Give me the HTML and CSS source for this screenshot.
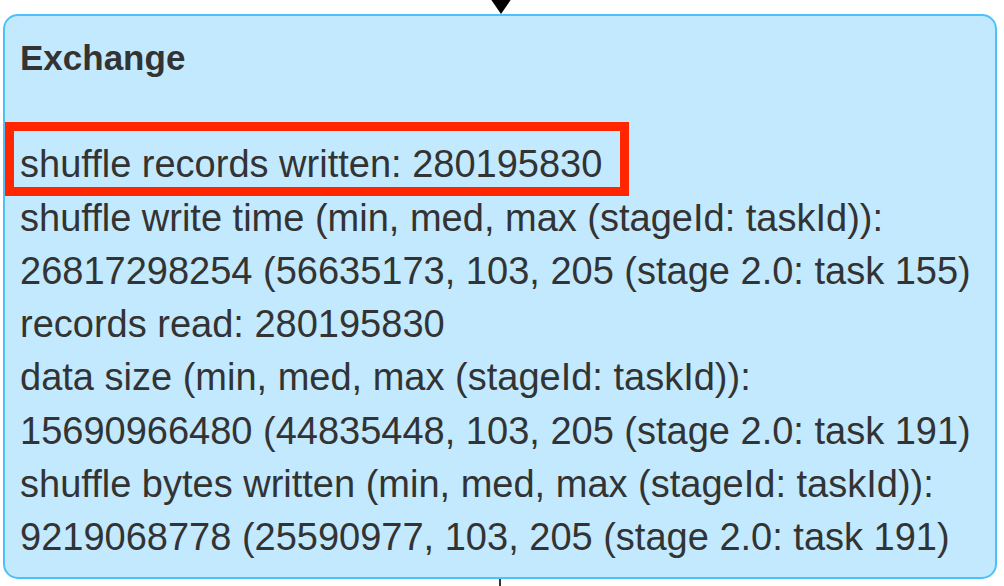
FILE: index.html
```html
<!DOCTYPE html>
<html>
<head>
<meta charset="utf-8">
<link rel="stylesheet" href="styles.css">
</head>
<body>
<div class="canvas">
  <svg class="edge-in" width="30" height="16" viewBox="0 0 30 16"><polygon points="5,-2 27,-2 16,14" fill="#000"/></svg>
  <div class="node">
    <div class="title">Exchange</div>
    <div class="spacer"></div>
    <div class="metrics">
      <div class="metric"><span class="highlight">shuffle records written: 280195830</span></div>
      <div class="metric">shuffle write time (min, med, max (stageId: taskId)):</div>
      <div class="metric">26817298254 (56635173, 103, 205 (stage 2.0: task 155)</div>
      <div class="metric">records read: 280195830</div>
      <div class="metric">data size (min, med, max (stageId: taskId)):</div>
      <div class="metric">15690966480 (44835448, 103, 205 (stage 2.0: task 191)</div>
      <div class="metric">shuffle bytes written (min, med, max (stageId: taskId)):</div>
      <div class="metric">9219068778 (25590977, 103, 205 (stage 2.0: task 191)</div>
    </div>
  </div>
  <div class="edge-out"></div>
</div>
</body>
</html>
```

FILE: styles.css
```css
html, body {
  margin: 0;
  padding: 0;
  background: #ffffff;
}

.canvas {
  position: relative;
  width: 1004px;
  height: 586px;
  overflow: hidden;
  padding: 14px 0 0 3px;
  box-sizing: border-box;
  font-family: "Liberation Sans", Arial, Helvetica, sans-serif;
  color: #333333;
}

.edge-in {
  position: absolute;
  left: 485px;
  top: 0;
}

.node {
  width: 994px;
  height: 565px;
  box-sizing: border-box;
  border: 2px solid #4dc1f9;
  border-radius: 15px;
  background: #c2e9fe;
  padding: 22px 0 0 15px;
}

.title {
  font-weight: bold;
  font-size: 35px;
  line-height: 40px;
}

.spacer {
  height: 60.3px;
}

.metric {
  font-size: 38px;
  line-height: 53.3px;
  white-space: nowrap;
}

.highlight {
  position: relative;
  display: inline-block;
}

.highlight::after {
  content: "";
  position: absolute;
  left: -15px;
  right: -27px;
  top: -16px;
  bottom: -4px;
  border: 9px solid #ff2600;
}

.edge-out {
  position: absolute;
  left: 499px;
  top: 579px;
  width: 2px;
  height: 7px;
  background: #333333;
}
```
